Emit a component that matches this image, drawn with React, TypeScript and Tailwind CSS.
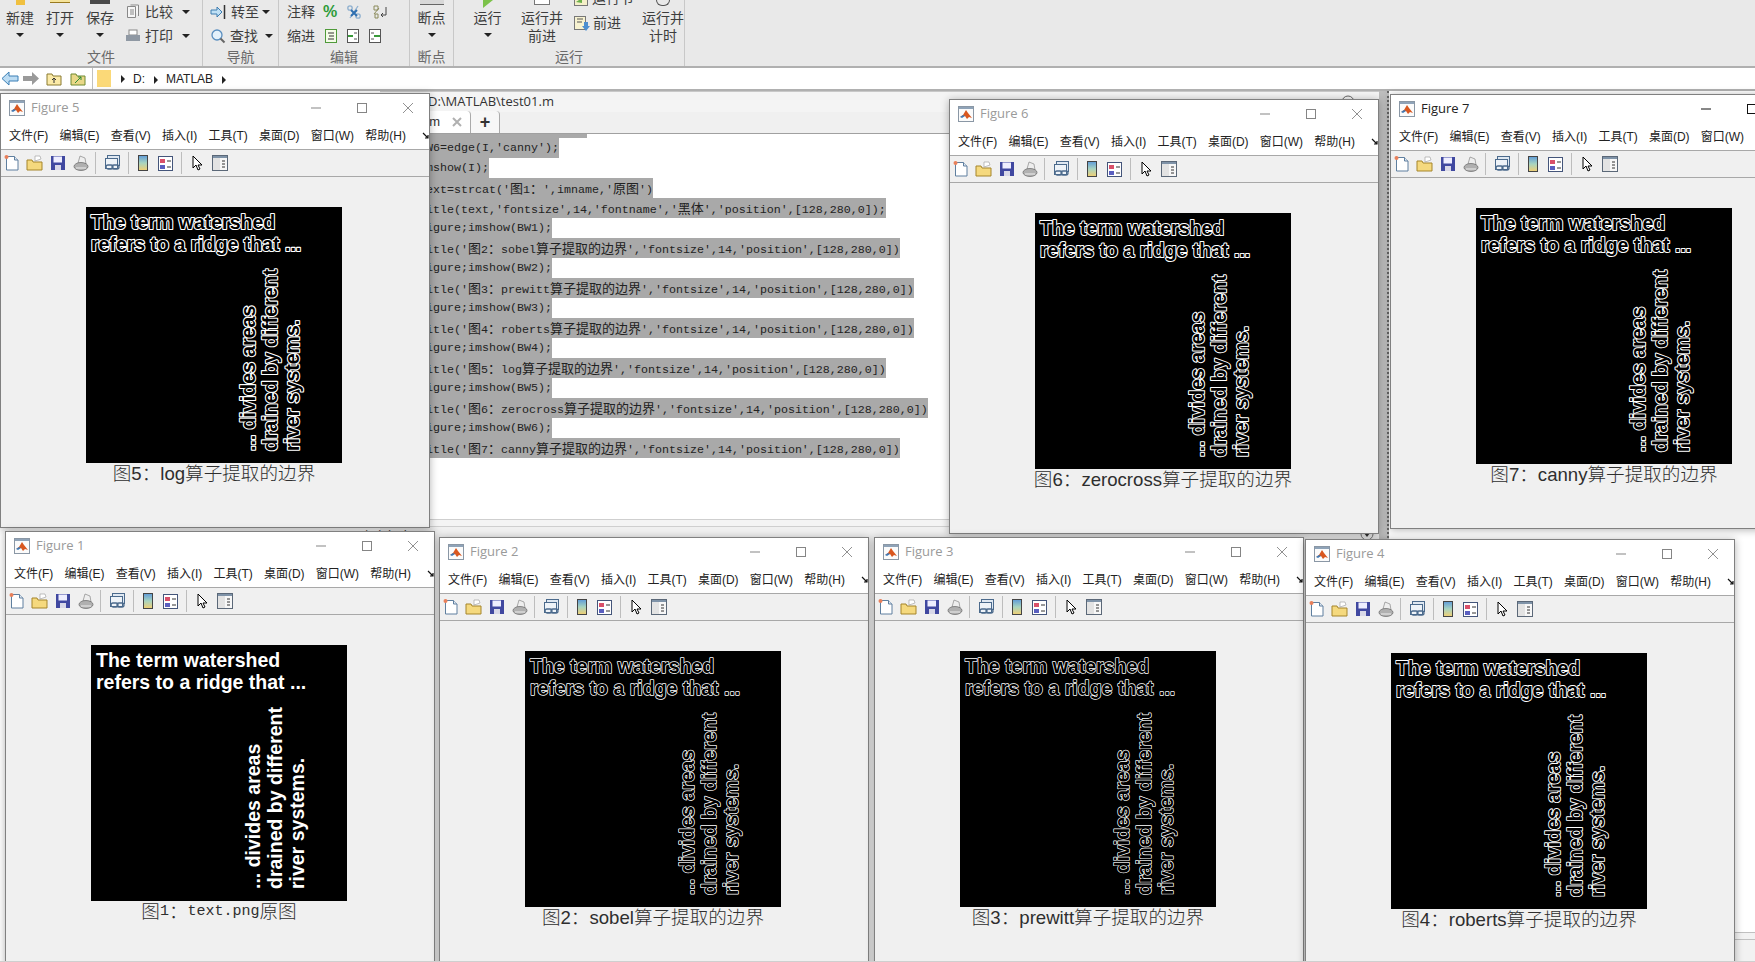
import React from "react";

const uiFont = "font-['Liberation_Sans','Noto_Sans_CJK_SC',sans-serif]";

function Caret({ className = "" }: { className?: string }) {
  return <span className={`inline-block w-0 h-0 border-x-[4px] border-x-transparent border-t-[4px] border-t-[#222] ${className}`} />;
}

function SmallCaret() {
  return <span className="inline-block w-0 h-0 border-y-[4px] border-y-transparent border-l-[4px] border-l-[#222]" />;
}

function MatlabIcon() {
  return (
    <svg width="16" height="16" viewBox="0 0 16 16">
      <rect x="0.5" y="0.5" width="15" height="15" fill="#fbfbfb" stroke="#8a97a5" />
      <rect x="1" y="1" width="14" height="2" fill="#8fa3b8" />
      <path d="M2 11l3-2 3-5 2 3 4 5-3-1-2 2-2-3z" fill="#d9571f" />
      <path d="M2 11l3-2 2 1-3 2z" fill="#3f79b5" />
    </svg>
  );
}

function WinControls({ active }: { active: boolean }) {
  const c = active ? "#111" : "#858585";
  return (
    <div className="ml-auto flex items-center">
      <svg width="12" height="12" viewBox="0 0 12 12"><path d="M1 6h10" stroke={c} /></svg>
      <svg className="ml-[34px]" width="12" height="12" viewBox="0 0 12 12"><rect x="1.5" y="1.5" width="9" height="9" fill="none" stroke={c} /></svg>
      <svg className="ml-[34px] mr-[15px]" width="12" height="12" viewBox="0 0 12 12"><path d="M1 1l10 10M11 1L1 11" stroke={c} strokeWidth="0.9" /></svg>
    </div>
  );
}

function ToolbarIcons() {
  return (
    <div className="flex items-center h-[26px] pl-[3px]">
      <svg width="16" height="18" viewBox="0 0 16 18" className="mr-[6px]">
        <path d="M2.5 2.5h8l3.5 3.5v10h-11.500z" fill="#fff" stroke="#5f7f9f" />
        <path d="M10.500 2.500v3.500h3.500" fill="#dfe8f2" stroke="#5f7f9f" />
        <circle cx="2.500" cy="3" r="2" fill="#e9805a" />
      </svg>
      <svg width="17" height="18" viewBox="0 0 17 18" className="mr-[7px]">
        <path d="M1 6h5l1 2h9v8H1z" fill="#f5d97e" stroke="#a5852a" />
        <path d="M9 2l5 0 1 3-6 2z" fill="#fff" stroke="#999" strokeWidth="0.6" />
      </svg>
      <svg width="16" height="16" viewBox="0 0 16 16" className="mr-[7px]">
        <rect x="1" y="1" width="14" height="14" fill="#4048a0" />
        <rect x="3.500" y="1.500" width="8.500" height="6" fill="#eef" />
        <rect x="5" y="10" width="6" height="5" fill="#d8d8e8" />
      </svg>
      <svg width="16" height="17" viewBox="0 0 16 17" className="mr-[6px]">
        <path d="M5 8l2-7 5 2 1 6z" fill="#eeeeee" stroke="#888" strokeWidth="0.7" />
        <ellipse cx="8" cy="11.500" rx="7" ry="4" fill="#b0b0b0" stroke="#666" strokeWidth="0.7" />
        <path d="M3 13h10" stroke="#eee" />
      </svg>
      <div className="w-px h-[22px] bg-[#bdbdbd] mr-[8px]" />
      <svg width="17" height="18" viewBox="0 0 17 18" className="mr-[7px]">
        <rect x="3.500" y="1.500" width="12" height="10" fill="#dfe8f2" stroke="#4b6a8c" />
        <rect x="1.500" y="4.500" width="12" height="10" fill="#eef3f8" stroke="#4b6a8c" />
        <rect x="2" y="11" width="7" height="4" rx="2" fill="none" stroke="#4b6a8c" strokeWidth="1.300" />
        <rect x="8" y="11" width="7" height="4" rx="2" fill="none" stroke="#4b6a8c" strokeWidth="1.300" />
      </svg>
      <div className="w-px h-[22px] bg-[#bdbdbd] mr-[9px]" />
      <svg width="10" height="16" viewBox="0 0 10 16" className="mr-[10px]">
        <defs>
          <linearGradient id="cb" x1="0" y1="0" x2="0" y2="1">
            <stop offset="0" stopColor="#5f9bd8" />
            <stop offset="0.5" stopColor="#a8d4c0" />
            <stop offset="1" stopColor="#f2cf72" />
          </linearGradient>
        </defs>
        <rect x="0.500" y="0.500" width="9" height="15" fill="url(#cb)" stroke="#444" />
      </svg>
      <svg width="15" height="15" viewBox="0 0 15 15" className="mr-[8px]">
        <rect x="0.500" y="0.500" width="14" height="14" fill="#fff" stroke="#44557a" />
        <rect x="2" y="3" width="5" height="4" fill="#d9506a" />
        <rect x="2" y="9" width="5" height="4" fill="#5a5fc0" />
        <path d="M9 5h4M9 11h4" stroke="#333" />
      </svg>
      <div className="w-px h-[22px] bg-[#bdbdbd] mr-[10px]" />
      <svg width="12" height="16" viewBox="0 0 12 16" className="mr-[8px]">
        <path d="M1 1v12l3-3 2 5 2-1-2-4h4z" fill="#fff" stroke="#000" strokeLinejoin="round" />
      </svg>
      <svg width="16" height="16" viewBox="0 0 16 16">
        <rect x="0.500" y="0.500" width="15" height="15" fill="#f7f7f7" stroke="#5b6878" />
        <rect x="1" y="1" width="14" height="2" fill="#7f93a8" />
        <rect x="1" y="3" width="7" height="12" fill="#e3e3e3" />
        <path d="M10 6h3M10 9h3M10 12h3" stroke="#333" />
      </svg>
    </div>
  );
}

const menuItems = ["文件(F)", "编辑(E)", "查看(V)", "插入(I)", "工具(T)", "桌面(D)", "窗口(W)", "帮助(H)"];

type Edge = "solid" | "log" | "sobel" | "prewitt" | "roberts" | "zerocross" | "canny";

// the picture itself: edge versions are a white ring round black glyphs
const edgeStroke: Record<Edge, number> = {
  solid: 0,
  log: 2.2,
  sobel: 1.5,
  prewitt: 1.4,
  roberts: 1.8,
  zerocross: 2,
  canny: 2,
};

function Watershed({ edge }: { edge: Edge }) {
  const solid = edge === "solid";
  const textProps = {
    fill: solid ? "#fff" : "#000",
    stroke: solid ? "none" : "#fff",
    strokeWidth: edgeStroke[edge],
    strokeLinejoin: "round" as const,
    paintOrder: "stroke fill",
  };
  return (
    <svg width="256" height="256" viewBox="0 0 256 256" className="block bg-black font-['Liberation_Sans',sans-serif] font-bold text-[19.5px]">
      <text x="5" y="22" {...textProps}>The term watershed</text>
      <text x="5" y="44" {...textProps}>refers to a ridge that ...</text>
      <text transform="translate(169 244) rotate(-90)" {...textProps}>... divides areas</text>
      <text transform="translate(191 244) rotate(-90)" {...textProps}>drained by different</text>
      <text transform="translate(213 244) rotate(-90)" {...textProps}>river systems.</text>
    </svg>
  );
}

function FigureWindow({ n, pos, edge, caption, active = false }: { n: number; pos: string; edge: Edge; caption: React.ReactNode; active?: boolean }) {
  return (
    <div className={`absolute w-[430px] h-[435px] bg-[#f0f0f0] border border-[#808080] shadow-[0_1px_8px_rgba(0,0,0,0.3)] ${uiFont} ${pos}`}>
      <div className="h-[28px] bg-white flex items-center pl-[8px]">
        <MatlabIcon />
        <span className={`ml-[6px] text-[13px] font-['Open_Sans',sans-serif] ${active ? "text-[#222]" : "text-[#9a9a9a]"}`}>Figure {n}</span>
        <WinControls active={active} />
      </div>
      <div className="h-[28px] bg-white border-b border-[#a8a8a8] flex items-center pl-[8px] gap-[11.200px] text-[12px] text-[#222] whitespace-nowrap">
        {menuItems.map((m) => (
          <span key={m}>{m}</span>
        ))}
        <svg width="8" height="8" viewBox="0 0 8 8" className="shrink-0 ml-[5px]"><path d="M1 1l5 5M6 3v3H3" stroke="#111" strokeWidth="1.200" fill="none" /></svg>
      </div>
      <div className="border-b border-[#a8a8a8]">
        <ToolbarIcons />
      </div>
      <div className="pl-[85px] pt-[30px]">
        <Watershed edge={edge} />
        <div className="w-[256px] flex justify-center h-[22px] leading-[22px] text-[18.600px] text-[#2e2e2e] font-light whitespace-nowrap">
          {caption}
        </div>
      </div>
    </div>
  );
}

function BigButton({ label, w = "w-10", caret = true, stub }: { label: string[]; w?: string; caret?: boolean; stub?: React.ReactNode }) {
  return (
    <div className={`${w} flex flex-col items-center text-[14px] leading-[18px] text-[#3d3d3d]`}>
      <div className="h-[9px] w-full flex justify-center">{stub}</div>
      {label.map((l) => (
        <span key={l} className="whitespace-nowrap">{l}</span>
      ))}
      {caret && <Caret className="mt-[6px]" />}
    </div>
  );
}

function Section({ title, w, children }: { title: string; w: string; children: React.ReactNode }) {
  return (
    <div className={`${w} h-[66px] shrink-0 flex flex-col border-r border-[#c8c8c8]`}>
      <div className="h-[48px] flex">{children}</div>
      <div className="text-center text-[14px] leading-[18px] text-[#6a6a6a]">{title}</div>
    </div>
  );
}

function Ribbon() {
  const row = "flex items-center h-[24px] gap-[4px] text-[14px] text-[#3d3d3d] whitespace-nowrap";
  return (
    <div className={`h-[66px] bg-[#e9e9e9] flex overflow-hidden ${uiFont}`}>
      <Section title="文件" w="w-[203px]">
        <BigButton label={["新建"]} stub={<div className="w-[9px] h-[5px] bg-[#f0c040]" />} />
        <BigButton label={["打开"]} stub={<div className="w-[20px] h-[3px] bg-[#f5e39a] border-b border-[#997a20]" />} />
        <BigButton label={["保存"]} stub={<div className="w-[20px] h-[4px] bg-[#4a4a4a]" />} />
        <div className="ml-[5px]">
          <div className={row}>
            <svg width="16" height="16" viewBox="0 0 16 16"><path d="M2.500 2.500h8v11h-8zM5.500 1h8v11" fill="#f6f6f6" stroke="#888" /><path d="M5 6h4M5 8h4M5 10h4" stroke="#888" /></svg>
            <span>比较</span>
            <Caret className="ml-[5px]" />
          </div>
          <div className={row}>
            <svg width="16" height="16" viewBox="0 0 16 16"><rect x="4" y="2" width="8" height="5" fill="#fff" stroke="#888" /><rect x="1" y="7" width="14" height="6" fill="#8f98a3" /></svg>
            <span>打印</span>
            <Caret className="ml-[5px]" />
          </div>
        </div>
      </Section>
      <Section title="导航" w="w-[76px]">
        <div className="ml-[7px]">
          <div className={row}>
            <svg width="17" height="16" viewBox="0 0 17 16"><path d="M1 6h6V3l5 5-5 5v-3H1z" fill="#bfe0f5" stroke="#3c7cb0" /><path d="M14.500 1v14" stroke="#333" strokeWidth="1.500" /></svg>
            <span>转至</span>
            <Caret className="ml-[-1px]" />
          </div>
          <div className={row}>
            <svg width="16" height="16" viewBox="0 0 16 16"><circle cx="7" cy="7" r="5" fill="#e4f1fb" stroke="#5a8fc0" strokeWidth="1.300" /><path d="M10.500 10.500l4 4" stroke="#666" strokeWidth="2" /></svg>
            <span>查找</span>
            <Caret className="ml-[3px]" />
          </div>
        </div>
      </Section>
      <Section title="编辑" w="w-[131px]">
        <div className="ml-[8px]">
          <div className={`${row} gap-[7px]`}>
            <span className="mr-[1px]">注释</span>
            <span className="text-[#2e9c3a] font-bold text-[16px]">%</span>
            <svg width="16" height="16" viewBox="0 0 16 16" className="ml-[2px]"><circle cx="4" cy="4" r="2.200" fill="none" stroke="#8fb0cf" strokeWidth="1.300" /><circle cx="12" cy="12" r="2.200" fill="none" stroke="#8fb0cf" strokeWidth="1.300" /><path d="M12 2L4 14" stroke="#8fb0cf" strokeWidth="1.300" /><path d="M5 6l6 6M11 6l-6 6" stroke="#2f6fb0" strokeWidth="2" /></svg>
            <svg width="16" height="16" viewBox="0 0 16 16" className="ml-[3px]"><path d="M2 2h4v4H2zM2 10l5-6M3 10h3v4H3z" fill="none" stroke="#8a8a5a" /><path d="M14 3v8H9M11 9l-2 2 2 2" fill="none" stroke="#444" /></svg>
          </div>
          <div className={`${row} gap-[8px]`}>
            <span className="mr-[1px]">缩进</span>
            <svg width="14" height="16" viewBox="0 0 14 16"><rect x="1.500" y="1.500" width="11" height="13" fill="#f4fbe8" stroke="#4f9a3a" /><path d="M4 5h6M5 8h5M4 11h6" stroke="#333" /></svg>
            <svg width="14" height="16" viewBox="0 0 14 16"><rect x="1.500" y="1.500" width="11" height="13" fill="#fff" stroke="#555" /><path d="M2 8h5" stroke="#3a9a3a" strokeWidth="2" /><path d="M8 5h3M8 11h3" stroke="#555" /></svg>
            <svg width="14" height="16" viewBox="0 0 14 16"><rect x="1.500" y="1.500" width="11" height="13" fill="#fff" stroke="#555" /><path d="M6 8h6" stroke="#3a9a3a" strokeWidth="2" /><path d="M3 5h3M3 11h3" stroke="#555" /></svg>
          </div>
        </div>
      </Section>
      <Section title="断点" w="w-[44px]">
        <BigButton label={["断点"]} w="w-full" stub={<div className="w-[24px] h-[5px] bg-[#d8d8d8] border-b border-[#666]" />} />
      </Section>
      <Section title="运行" w="w-[231px]">
        <BigButton label={["运行"]} w="w-[68px]" stub={<div className="w-0 h-0 border-t-[8px] border-t-[#7cc24a] border-r-[10px] border-r-transparent" />} />
        <BigButton label={["运行并", "前进"]} w="w-[42px]" caret={false} stub={<div className="w-[16px] h-[5px] bg-white border-b border-r border-l border-[#777]" />} />
        <div className="ml-[10px] -mt-[14px] w-[70px]">
          <div className="flex items-center gap-[3px] h-[25px] text-[14px] text-[#3d3d3d] whitespace-nowrap">
            <svg width="16" height="16" viewBox="0 0 16 16"><rect x="1.500" y="1.500" width="13" height="13" fill="#f4efc8" stroke="#777" /><path d="M3 11l6-4v5z" fill="#6ab04a" /></svg>
            <span>运行节</span>
          </div>
          <div className="flex items-center gap-[3px] h-[25px] text-[14px] text-[#3d3d3d] whitespace-nowrap">
            <svg width="17" height="17" viewBox="0 0 17 17"><rect x="1.500" y="1.500" width="11" height="13" fill="#f7f2d0" stroke="#777" /><path d="M4 4h6M4 7h5" stroke="#555" /><path d="M11 7v4h-2l4 5 4-5h-2V7z" fill="#4d8fd0" /></svg>
            <span>前进</span>
          </div>
        </div>
        <BigButton label={["运行并", "计时"]} w="w-[42px]" caret={false} stub={<div className="w-[14px] h-[6px] border-b border-x border-[#555] rounded-b-full" />} />
      </Section>
      <div className="flex-1" />
    </div>
  );
}

function AddressBar() {
  return (
    <div className={`h-[25px] bg-white border-y-2 border-y-[#b0b0b0] flex items-center ${uiFont}`}>
      <div className="w-[93px] h-full flex items-center pl-[1px] border-r border-[#c0c0c0]">
        <svg width="18" height="15" viewBox="0 0 18 15"><path d="M8 1L1 7.500l7 6.500V10h9V5H8z" fill="#bcdcf3" stroke="#3b7fb5" /></svg>
        <svg width="18" height="15" viewBox="0 0 18 15" className="ml-[3px]"><path d="M10 1l7 6.500-7 6.500V10H1V5h9z" fill="#9a9a9a" /></svg>
        <svg width="16" height="15" viewBox="0 0 16 15" className="ml-[6px]"><path d="M1 3h5l1 2h8v9H1z" fill="#fbeaa8" stroke="#8a7a30" /><path d="M8 12V7M6 9l2-2 2 2" stroke="#333" fill="none" /></svg>
        <svg width="16" height="15" viewBox="0 0 16 15" className="ml-[8px]"><path d="M1 3h5l1 2h8v9H1z" fill="#e9d888" stroke="#6f8a30" /><path d="M5 12l6-6M11 6H8M11 6v3" stroke="#2e8a3a" fill="none" /></svg>
      </div>
      <div className="w-[14px] h-[17px] bg-[#fbd978] ml-[4px] mr-[10px]" />
      <SmallCaret />
      <span className="ml-[8px] text-[12px] text-[#222]">D:</span>
      <span className="ml-[9px]"><SmallCaret /></span>
      <span className="ml-[8px] text-[12px] text-[#222]">MATLAB</span>
      <span className="ml-[9px]"><SmallCaret /></span>
    </div>
  );
}

const codeLines = [
  "BW6=edge(I,'canny');",
  "imshow(I);",
  "text=strcat('图1：',imname,'原图')",
  "title(text,'fontsize',14,'fontname','黑体','position',[128,280,0]);",
  "figure;imshow(BW1);",
  "title('图2：sobel算子提取的边界','fontsize',14,'position',[128,280,0])",
  "figure;imshow(BW2);",
  "title('图3：prewitt算子提取的边界','fontsize',14,'position',[128,280,0])",
  "figure;imshow(BW3);",
  "title('图4：roberts算子提取的边界','fontsize',14,'position',[128,280,0])",
  "figure;imshow(BW4);",
  "title('图5：log算子提取的边界','fontsize',14,'position',[128,280,0])",
  "figure;imshow(BW5);",
  "title('图6：zerocross算子提取的边界','fontsize',14,'position',[128,280,0])",
  "figure;imshow(BW6);",
  "title('图7：canny算子提取的边界','fontsize',14,'position',[128,280,0])",
];

function CodeLine({ code }: { code: string }) {
  const parts = code.split(/([^\x00-\x7f]+)/);
  return (
    <div className="h-[20px] leading-[20px]">
      <span className="inline-block h-[20px] bg-[#a9a9a9] whitespace-pre">
        {parts.map((p, i) =>
          i % 2 === 1 ? (
            <span key={i} className="text-[13px] font-['Noto_Sans_CJK_SC',sans-serif]">{p}</span>
          ) : (
            <span key={i}>{p}</span>
          ),
        )}
      </span>
    </div>
  );
}

function Editor() {
  return (
    <div className="w-[999px] shrink-0 flex flex-col bg-white">
      <div className="h-[21px] bg-[#f4f4f4] border-t border-[#c8c8c8] pl-[48px] pr-[24px] flex items-center justify-between text-[13px] text-[#333] font-['Open_Sans',sans-serif]">
        <span>D:\MATLAB\test01.m</span>
        <svg width="14" height="14" viewBox="0 0 14 14"><circle cx="7" cy="7" r="6" fill="none" stroke="#666" /></svg>
      </div>
      <div className="h-[22px] bg-[#f0f0f0] border-b border-[#a0a0a0] flex items-end">
        <div className="w-[91px] h-[22px] bg-white border-r border-[#aaa] rounded-tr flex items-center justify-end gap-[12px] pr-[8px] text-[13px] text-[#333]">
          <span>test01.m</span>
          <svg width="10" height="10" viewBox="0 0 10 10"><path d="M1 1l8 8M9 1L1 9" stroke="#b0b0b0" strokeWidth="2" /></svg>
        </div>
        <div className="w-[29px] h-[22px] bg-[#f7f7f7] border-r border-[#aaa] rounded-tr flex items-center justify-center text-[18px] font-bold text-[#333]">+</div>
      </div>
      <div className="h-[385px] pl-[39px] font-['Liberation_Mono','Noto_Sans_CJK_SC',monospace] text-[11.67px] text-[#222]">
        <div className="h-[4px] w-[168px] bg-[#a9a9a9]" />
        {codeLines.map((c, i) => (
          <CodeLine key={i} code={c} />
        ))}
      </div>
      <div className="h-[8px] border-y border-[#cfcfcf] bg-[#f4f4f4]" />
      <div className="flex-1 bg-[#f0f0f0] flex text-[13px] text-[#333] whitespace-nowrap pr-[5px]">
        <span className="ml-[-20px]">命令行窗口</span>
        <svg width="14" height="14" viewBox="0 0 14 14" className="ml-auto"><circle cx="7" cy="7" r="6" fill="none" stroke="#777" /><path d="M4 6h6l-3 4z" fill="#333" /></svg>
      </div>
    </div>
  );
}

export default function App() {
  const mono = "font-['Liberation_Mono',monospace] text-[15px]";
  return (
    <div className={`relative w-[1755px] h-[962px] overflow-hidden bg-white ${uiFont}`}>
      <div className="flex flex-col h-full">
        <Ribbon />
        <AddressBar />
        <div className="flex flex-1">
          <div className="w-[380px] shrink-0 bg-white" />
          <Editor />
          <div className="w-[10px] shrink-0 bg-[#bdbdbd] border-r-2 border-dotted border-r-[#666]" />
          <div className="flex-1 bg-white flex flex-col justify-end">
            <div className="h-[30px] border-t border-[#c0c0c0] bg-[#f2f2f2]">
              <div className="h-[7px] border-b border-[#c0c0c0]" />
            </div>
          </div>
        </div>
      </div>

      <FigureWindow n={5} pos="left-[0px] top-[93px]" edge="log" caption="图5：log算子提取的边界" />
      <FigureWindow n={6} pos="left-[949px] top-[99px]" edge="zerocross" caption="图6：zerocross算子提取的边界" />
      <FigureWindow n={7} pos="left-[1390px] top-[94px]" edge="canny" caption="图7：canny算子提取的边界" active />
      <FigureWindow
        n={1}
        pos="left-[5px] top-[531px]"
        edge="solid"
        caption={
          <>
            图<span className={mono}>1</span>：<span className={mono}>text.png</span>原图
          </>
        }
      />
      <FigureWindow n={2} pos="left-[439px] top-[537px]" edge="sobel" caption="图2：sobel算子提取的边界" />
      <FigureWindow n={3} pos="left-[874px] top-[537px]" edge="prewitt" caption="图3：prewitt算子提取的边界" />
      <FigureWindow n={4} pos="left-[1305px] top-[539px]" edge="roberts" caption="图4：roberts算子提取的边界" />

      <div className="absolute left-0 right-0 bottom-0 h-px bg-[#cfcfcf]" />
    </div>
  );
}
